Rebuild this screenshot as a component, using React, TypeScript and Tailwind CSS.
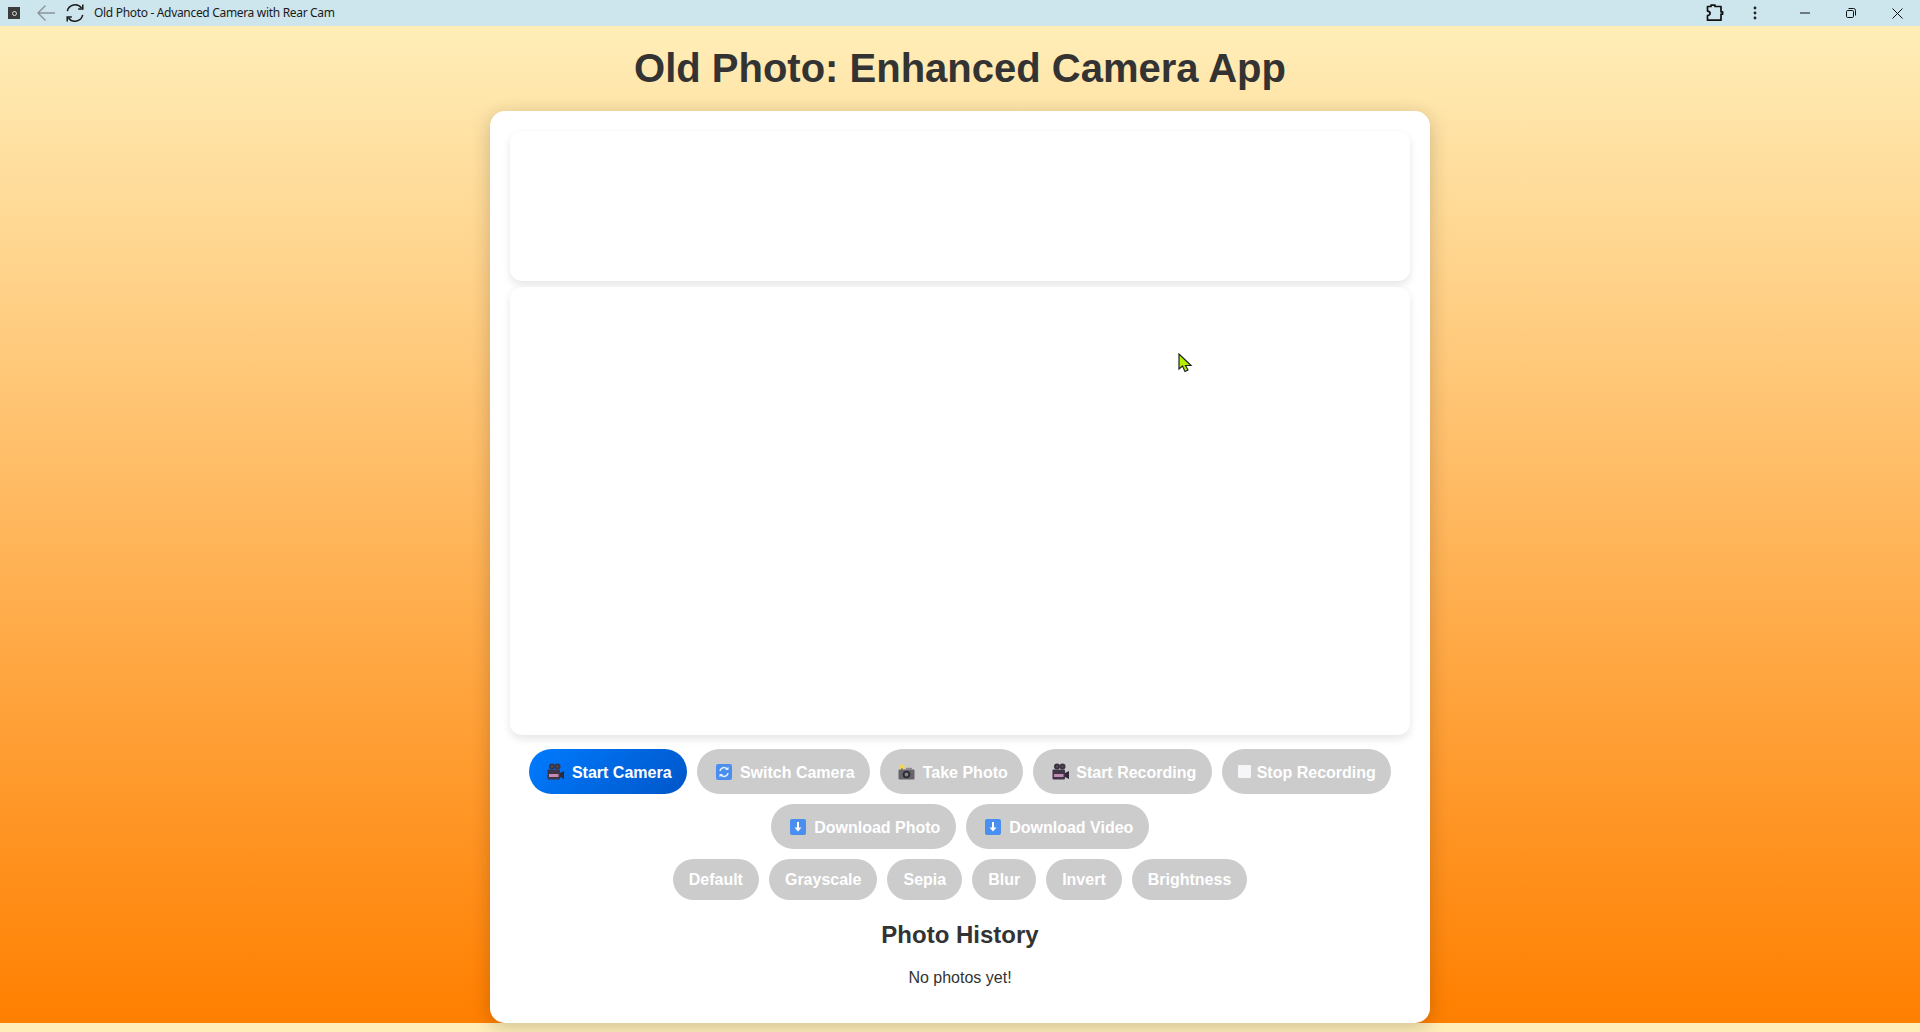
import type { ReactNode } from 'react';

function MovieIcon() {
  return (
    <svg width="17" height="17" viewBox="0 0 17 17">
      <circle cx="5" cy="3.5" r="3" fill="#3b3340" />
      <circle cx="10.5" cy="3.5" r="3" fill="#3b3340" />
      <circle cx="5" cy="3.5" r="1" fill="#5d5562" />
      <circle cx="10.5" cy="3.5" r="1" fill="#5d5562" />
      <rect x="0.5" y="6.5" width="12.5" height="10" rx="1" fill="#3f3548" />
      <rect x="2" y="11" width="9.5" height="3" fill="#c28bb0" />
      <path d="M13 10l4-2v8l-4-2z" fill="#2f2a38" />
    </svg>
  );
}

function SwitchIcon() {
  return (
    <svg width="16" height="16" viewBox="0 0 16 16">
      <rect width="16" height="16" rx="2" fill="#4a8ff0" />
      <path d="M4 7a4 4 0 0 1 7-2" fill="none" stroke="#e3eefb" strokeWidth="1.6" />
      <path d="M12 9a4 4 0 0 1-7 2" fill="none" stroke="#e3eefb" strokeWidth="1.6" />
      <path d="M9 6h3.5V2.8zM7 10H3.5v3.2z" fill="#e3eefb" />
    </svg>
  );
}

function CameraIcon() {
  return (
    <svg width="17" height="16" viewBox="0 0 17 16">
      <circle cx="4" cy="2.8" r="2.6" fill="#f4d35e" />
      <rect x="3" y="4" width="2" height="2" fill="#b09a50" />
      <rect x="0.5" y="5.5" width="16" height="10" rx="1" fill="#67646c" />
      <rect x="8" y="3.8" width="6" height="2" fill="#8a878e" />
      <circle cx="8.5" cy="10.5" r="3.8" fill="#2e2c32" />
      <circle cx="8.5" cy="10.5" r="1.9" fill="#85828c" />
    </svg>
  );
}

function DownloadIcon() {
  return (
    <svg width="16" height="16" viewBox="0 0 16 16">
      <rect width="16" height="16" rx="2" fill="#4a8ff0" />
      <path d="M8 3v8" stroke="#fff" strokeWidth="2" />
      <path d="M4.5 8.5L8 12.5l3.5-4z" fill="#fff" />
    </svg>
  );
}

function StopIcon() {
  return <span className="block h-[13px] w-[13px] rounded-[1px] bg-[#f6f6f8]" />;
}

function ActionButton({ icon, label, width, active, narrow }: { icon: ReactNode; label: string; width: string; active?: boolean; narrow?: boolean }) {
  return (
    <button
      className={`flex h-[45px] items-center justify-center rounded-[25px] pt-[2px] text-[16px] font-bold whitespace-nowrap text-white ${width} ${
        active ? 'bg-[linear-gradient(135deg,#007bff,#0056c8)]' : 'bg-[#cccccc]'
      }`}
    >
      <span className={`mr-[4.5px] -mt-[2px] flex items-center justify-center ${narrow ? 'w-[15px]' : 'w-[23px]'}`}>{icon}</span>
      {label}
    </button>
  );
}

function FilterButton({ label }: { label: string }) {
  return (
    <button className="flex h-[41px] items-center rounded-[25px] bg-[#cccccc] px-4 text-[16px] font-bold text-white">
      {label}
    </button>
  );
}

function TitleBar() {
  return (
    <div className="flex h-[26px] items-center bg-[#cde5ed] text-[#1a1a1a]">
      <div className="ml-2 flex h-[12px] w-[12px] items-center justify-center bg-[#3c3c3c]">
        <span className="block h-[5px] w-[5px] rounded-full border border-[#ddd]" />
      </div>
      <svg className="ml-[16px]" width="20" height="18" viewBox="0 0 20 18" fill="none" stroke="#8a9498" strokeWidth="1.4">
        <path d="M19 9H2M9.5 1.5L2 9l7.5 7.5" />
      </svg>
      <svg className="ml-[9px]" width="20" height="20" viewBox="0 0 20 20" fill="none" stroke="#1a1a1a" strokeWidth="1.5">
        <path d="M2.3 8.2A8 8 0 0 1 16.5 5" />
        <path d="M17.7 11.8A8 8 0 0 1 3.5 15" />
        <path d="M17.8 1.5v4.6h-4.6M2.2 18.5v-4.6h4.6" />
      </svg>
      <span className="ml-[9px] font-['Noto_Sans',sans-serif] text-[12px] tracking-[-0.32px]">Old Photo - Advanced Camera with Rear Cam</span>
      <div className="ml-auto flex items-center">
        <svg width="18" height="18" viewBox="0 0 18 18" fill="none" stroke="#111" strokeWidth="1.7" strokeLinejoin="round">
          <path d="M1.5 2.5h3.5V1.2h4v1.3h6v5.3h1.6v2.4h-1.6v6H1.5v-4.7c1.8-.2 2.6-1 2.6-2.2s-.8-2-2.6-2.2z" />
        </svg>
        <svg className="ml-[29px]" width="4" height="14" viewBox="0 0 4 14" fill="#222">
          <circle cx="2" cy="2" r="1.4" />
          <circle cx="2" cy="7" r="1.4" />
          <circle cx="2" cy="12" r="1.4" />
        </svg>
        <svg className="ml-[43px]" width="10" height="2" viewBox="0 0 10 2" stroke="#111">
          <path d="M0 1h10" />
        </svg>
        <svg className="ml-[36px]" width="10" height="10" viewBox="0 0 10 10" fill="none" stroke="#111">
          <rect x="0.5" y="2.5" width="7" height="7" rx="1.2" />
          <path d="M2.5 .5h5a2 2 0 0 1 2 2v5" />
        </svg>
        <svg className="ml-[36px] mr-[17px]" width="11" height="11" viewBox="0 0 11 11" stroke="#111">
          <path d="M.5 .5l10 10M10.5 .5l-10 10" />
        </svg>
      </div>
    </div>
  );
}

export default function App() {
  const filters = ['Default', 'Grayscale', 'Sepia', 'Blur', 'Invert', 'Brightness'];

  return (
    <div className="relative h-[1032px] overflow-hidden bg-[#ffeeb8] font-['Liberation_Sans',Arial,sans-serif] text-[#333333]">
      <TitleBar />
      <div className="flex h-[1006px] flex-col items-center bg-[linear-gradient(#ffeeb8,#ff7f00)] bg-[length:100%_997px] bg-no-repeat">
        <h1 className="mt-[19px] text-[40px] leading-[46px] font-bold">Old Photo: Enhanced Camera App</h1>
        <main className="mt-[20px] h-[912px] w-[940px] rounded-[15px] bg-white p-5 shadow-[0_4px_20px_rgba(0,0,0,0.2)]">
          <div className="h-[150px] rounded-[12px] bg-white shadow-[0_4px_8px_rgba(0,0,0,0.1)]" />
          <div className="mt-[6px] h-[448px] rounded-[12px] bg-white shadow-[0_4px_8px_rgba(0,0,0,0.1)]" />
          <div className="mt-[14px] flex flex-wrap justify-center gap-[10px]">
            <ActionButton active width="w-[158px]" icon={<MovieIcon />} label="Start Camera" />
            <ActionButton width="w-[173px]" icon={<SwitchIcon />} label="Switch Camera" />
            <ActionButton width="w-[143px]" icon={<CameraIcon />} label="Take Photo" />
            <ActionButton width="w-[179px]" icon={<MovieIcon />} label="Start Recording" />
            <ActionButton narrow width="w-[169px]" icon={<StopIcon />} label="Stop Recording" />
            <ActionButton width="w-[185px]" icon={<DownloadIcon />} label="Download Photo" />
            <ActionButton width="w-[183px]" icon={<DownloadIcon />} label="Download Video" />
          </div>
          <div className="mt-[10px] flex justify-center gap-[10px]">
            {filters.map((f) => (
              <FilterButton key={f} label={f} />
            ))}
          </div>
          <h2 className="mt-[21px] text-center text-[24px] leading-[28px] font-bold">Photo History</h2>
          <p className="mt-[20px] text-center text-[16px] leading-[18px]">No photos yet!</p>
        </main>
      </div>
      {/* mouse pointer captured in the screenshot */}
      <svg className="absolute top-[353px] left-[1178px]" width="15" height="20" viewBox="0 0 15 20">
        <path d="M1 1v15l3.5-3 2.5 5.5 3-1.5-2.5-4.5H13z" fill="#b4f000" stroke="#222" strokeWidth="1.2" />
      </svg>
    </div>
  );
}
